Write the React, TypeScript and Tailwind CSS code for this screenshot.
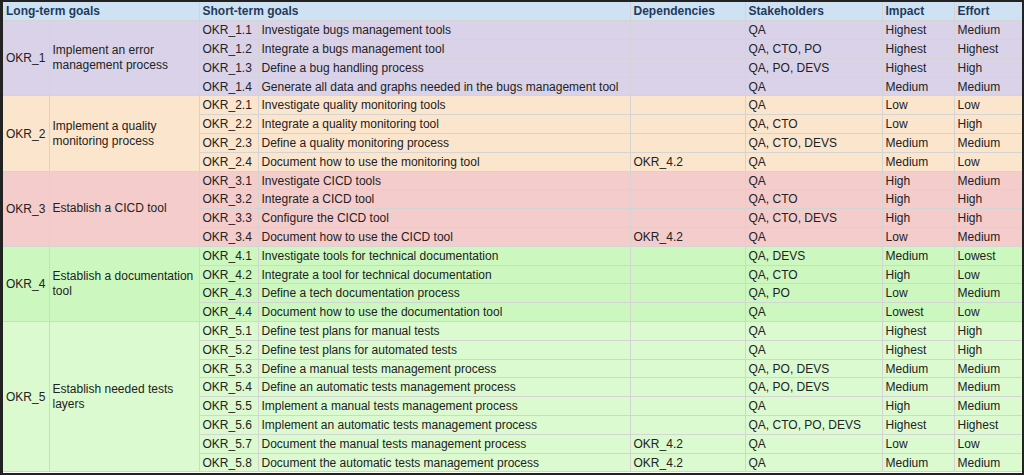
import React from 'react'

type Group = { id: string; title: string; bg: string; rows: string[][] }

const groups: Group[] = [
  {
    id: 'OKR_1',
    title: 'Implement an error management process',
    bg: 'bg-[#d9d2e9]',
    rows: [
      ['OKR_1.1', 'Investigate bugs management tools', '', 'QA', 'Highest', 'Medium'],
      ['OKR_1.2', 'Integrate a bugs management tool', '', 'QA, CTO, PO', 'Highest', 'Highest'],
      ['OKR_1.3', 'Define a bug handling process', '', 'QA, PO, DEVS', 'Highest', 'High'],
      ['OKR_1.4', 'Generate all data and graphs needed in the bugs management tool', '', 'QA', 'Medium', 'Medium'],
    ],
  },
  {
    id: 'OKR_2',
    title: 'Implement a quality monitoring process',
    bg: 'bg-[#fce5cd]',
    rows: [
      ['OKR_2.1', 'Investigate quality monitoring tools', '', 'QA', 'Low', 'Low'],
      ['OKR_2.2', 'Integrate a quality monitoring tool', '', 'QA, CTO', 'Low', 'High'],
      ['OKR_2.3', 'Define a quality monitoring process', '', 'QA, CTO, DEVS', 'Medium', 'Medium'],
      ['OKR_2.4', 'Document how to use the monitoring tool', 'OKR_4.2', 'QA', 'Medium', 'Low'],
    ],
  },
  {
    id: 'OKR_3',
    title: 'Establish a CICD tool',
    bg: 'bg-[#f4cccc]',
    rows: [
      ['OKR_3.1', 'Investigate CICD tools', '', 'QA', 'High', 'Medium'],
      ['OKR_3.2', 'Integrate a CICD tool', '', 'QA, CTO', 'High', 'High'],
      ['OKR_3.3', 'Configure the CICD tool', '', 'QA, CTO, DEVS', 'High', 'High'],
      ['OKR_3.4', 'Document how to use the CICD tool', 'OKR_4.2', 'QA', 'Low', 'Medium'],
    ],
  },
  {
    id: 'OKR_4',
    title: 'Establish a documentation tool',
    bg: 'bg-[#ccf8c0]',
    rows: [
      ['OKR_4.1', 'Investigate tools for technical documentation', '', 'QA, DEVS', 'Medium', 'Lowest'],
      ['OKR_4.2', 'Integrate a tool for technical documentation', '', 'QA, CTO', 'High', 'Low'],
      ['OKR_4.3', 'Define a tech documentation process', '', 'QA, PO', 'Low', 'Medium'],
      ['OKR_4.4', 'Document how to use the documentation tool', '', 'QA', 'Lowest', 'Low'],
    ],
  },
  {
    id: 'OKR_5',
    title: 'Establish needed tests layers',
    bg: 'bg-[#dcfad0]',
    rows: [
      ['OKR_5.1', 'Define test plans for manual tests', '', 'QA', 'Highest', 'High'],
      ['OKR_5.2', 'Define test plans for automated tests', '', 'QA', 'Highest', 'High'],
      ['OKR_5.3', 'Define a manual tests management process', '', 'QA, PO, DEVS', 'Medium', 'Medium'],
      ['OKR_5.4', 'Define an automatic tests management process', '', 'QA, PO, DEVS', 'Medium', 'Medium'],
      ['OKR_5.5', 'Implement a manual tests management process', '', 'QA', 'High', 'Medium'],
      ['OKR_5.6', 'Implement an automatic tests management process', '', 'QA, CTO, PO, DEVS', 'Highest', 'Highest'],
      ['OKR_5.7', 'Document the manual tests management process', 'OKR_4.2', 'QA', 'Low', 'Low'],
      ['OKR_5.8', 'Document the automatic tests management process', 'OKR_4.2', 'QA', 'Medium', 'Medium'],
    ],
  },
]

const cell = 'border border-[#d4d4d4] px-[3px] h-[18.8px] py-0 whitespace-nowrap overflow-hidden'

export default function App() {
  return (
    <div
      className="w-[1024px] h-[475px] overflow-hidden border-2 border-l-[3px] border-[#222] bg-white text-[12px] leading-[14px] text-[#222]"
      style={{ fontFamily: '"Liberation Sans", Arial, sans-serif' }}
    >
      <table className="w-full table-fixed border-collapse">
        <colgroup>
          <col className="w-[46px]" />
          <col className="w-[150px]" />
          <col className="w-[59px]" />
          <col className="w-[372px]" />
          <col className="w-[115px]" />
          <col className="w-[137px]" />
          <col className="w-[72px]" />
          <col />
        </colgroup>
        <thead>
          <tr className="bg-[#cfe2f3] font-bold text-[#1f3a5c] text-left">
            <th colSpan={2} className={`${cell} border-t-0 border-l-0`}>Long-term goals</th>
            <th colSpan={2} className={`${cell} border-t-0`}>Short-term goals</th>
            <th className={`${cell} border-t-0`}>Dependencies</th>
            <th className={`${cell} border-t-0`}>Stakeholders</th>
            <th className={`${cell} border-t-0`}>Impact</th>
            <th className={`${cell} border-t-0 border-r-0`}>Effort</th>
          </tr>
        </thead>
        <tbody>
          {groups.map((g) =>
            g.rows.map((r, i) => (
              <tr key={r[0]} className={g.bg}>
                {i === 0 && (
                  <>
                    <td rowSpan={g.rows.length} className="border border-[#d4d4d4] border-l-0 px-[3px] align-middle">
                      {g.id}
                    </td>
                    <td rowSpan={g.rows.length} className="border border-[#d4d4d4] px-[3px] align-middle leading-[15px]">
                      {g.title}
                    </td>
                  </>
                )}
                {r.map((v, j) => (
                  <td key={j} className={`${cell} ${j === 5 ? 'border-r-0' : ''}`}>
                    {v}
                  </td>
                ))}
              </tr>
            ))
          )}
        </tbody>
      </table>
    </div>
  )
}
